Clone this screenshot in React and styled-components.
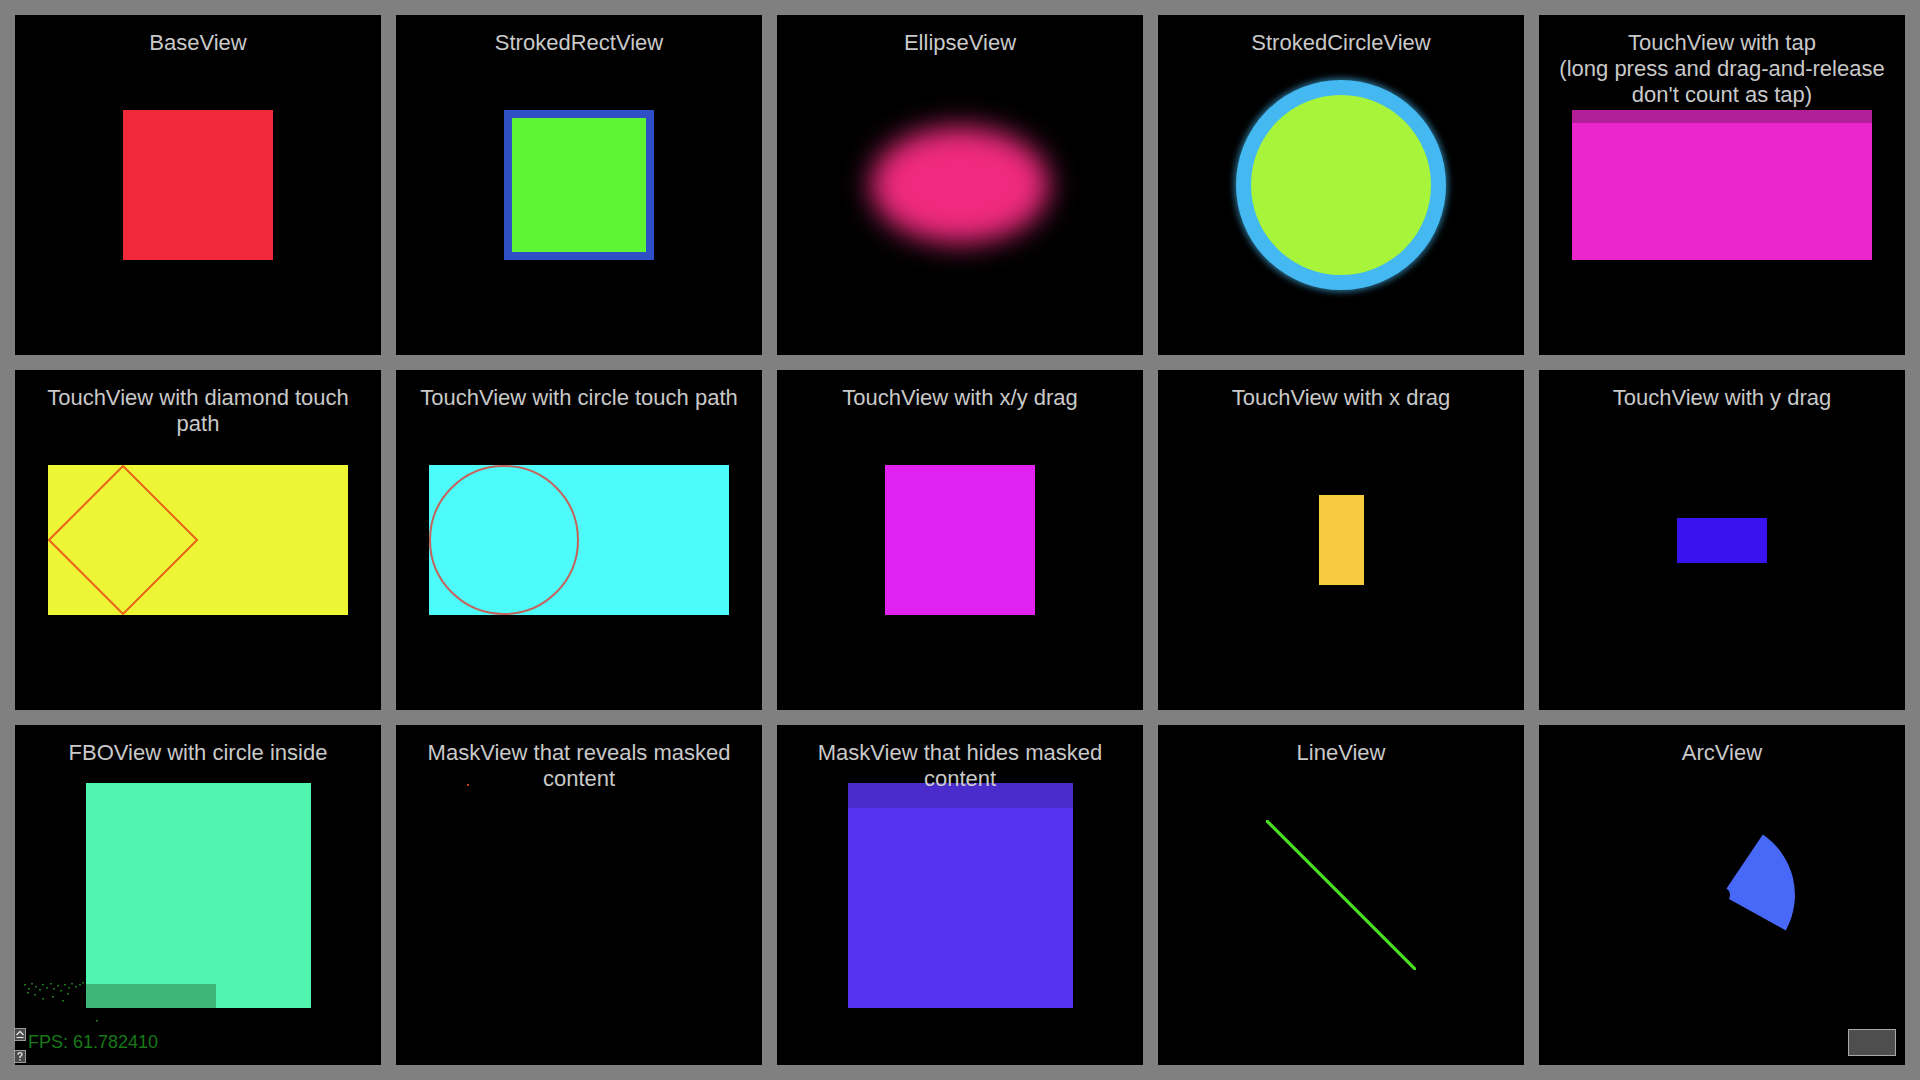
import React from 'react'
import styled, { createGlobalStyle } from 'styled-components'

const GlobalStyle = createGlobalStyle`
  html, body { margin: 0; padding: 0; background: #808080; }
  body { font-family: "Liberation Sans", Arial, sans-serif; }
`

const Screen = styled.main`
  position: relative;
  width: 1920px;
  height: 1080px;
  box-sizing: border-box;
  padding: 15px;
  display: grid;
  grid-template-columns: repeat(5, 366px);
  grid-template-rows: repeat(3, 340px);
  gap: 15px;
  background: #808080;
  overflow: hidden;
`

const Panel = styled.section`
  position: relative;
  display: grid;
  background: #000;
  overflow: hidden;
`

const Title = styled.h2`
  grid-area: 1 / 1;
  align-self: start;
  z-index: 1;
  margin: 0;
  padding: 15px 12px 0;
  font: 400 22px/26px "Liberation Sans", Arial, sans-serif;
  color: #c9c9c9;
  text-align: center;
`

const Stage = styled.div`
  grid-area: 1 / 1;
  display: flex;
  align-items: center;
  justify-content: center;
`

const Block = styled.div`
  position: relative;
  box-sizing: border-box;
  width: ${p => p.$w}px;
  height: ${p => p.$h}px;
  background: ${p => p.$color};
  border: ${p => (p.$stroke ? `8px solid ${p.$stroke}` : 'none')};
  box-shadow: ${p => (p.$band ? `inset 0 ${p.$bandH}px 0 ${p.$band}` : 'none')};
  svg { display: block; }
`

const Glow = styled.div`
  width: 178px;
  height: 116px;
  border-radius: 50%;
  background: #f02a7e;
  filter: blur(14px);
`

const Ring = styled.div`
  box-sizing: border-box;
  width: 210px;
  height: 210px;
  border-radius: 50%;
  border: 15px solid #44b8f0;
  background: #a8f43a;
  box-shadow: 0 0 6px 2px rgba(68, 184, 240, 0.6);
`

const Strip = styled.div`
  position: absolute;
  left: 0;
  bottom: 0;
  width: 130px;
  height: 24px;
  background: #3db676;
`

const Speck = styled.div`
  position: absolute;
  left: ${p => p.$x}px;
  top: ${p => p.$y}px;
  width: 2px;
  height: 2px;
  background: ${p => p.$color};
`

const Fps = styled.div`
  position: absolute;
  left: 28px;
  top: 1033px;
  font: 400 18px/18px "Liberation Sans", Arial, sans-serif;
  color: #187818;
  z-index: 2;
`

const DebugButton = styled.div`
  position: absolute;
  left: 14px;
  top: ${p => p.$top}px;
  width: 12px;
  height: 13px;
  box-sizing: border-box;
  border: 1px solid #9a9a9a;
  background: #4a4a4a;
  z-index: 2;
  svg { display: block; }
`

const Noise = styled.svg`
  position: absolute;
  left: 22px;
  top: 980px;
  z-index: 2;
`

const Tray = styled.div`
  position: absolute;
  left: 1848px;
  top: 1029px;
  width: 48px;
  height: 27px;
  box-sizing: border-box;
  border: 1px solid #a8a8a8;
  background: #4e4e4e;
`

const noiseDots = [
  [2, 4], [6, 8], [9, 3], [13, 6], [17, 9], [20, 4], [24, 7], [28, 3], [31, 8],
  [35, 5], [38, 10], [42, 4], [46, 7], [49, 3], [53, 6], [57, 4], [60, 2],
  [12, 14], [20, 18], [30, 16], [40, 20], [5, 12], [45, 13], [74, 40]
]

function Demo({ title, children }) {
  return (
    <Panel>
      <Title>{title}</Title>
      <Stage>{children}</Stage>
    </Panel>
  )
}

export default function App() {
  return (
    <Screen>
      <GlobalStyle />

      <Demo title="BaseView">
        <Block $w={150} $h={150} $color="#f0283a" />
      </Demo>
      <Demo title="StrokedRectView">
        <Block $w={150} $h={150} $color="#5ef532" $stroke="#2f4fc4" />
      </Demo>
      <Demo title="EllipseView">
        <Glow />
      </Demo>
      <Demo title="StrokedCircleView">
        <Ring />
      </Demo>
      <Demo title={<>TouchView with tap<br />(long press and drag-and-release don't count as tap)</>}>
        <Block $w={300} $h={150} $color="#ea26cc" $band="#b31f99" $bandH={13} />
      </Demo>

      <Demo title="TouchView with diamond touch path">
        <Block $w={300} $h={150} $color="#eef535">
          <svg width="150" height="150" viewBox="0 0 150 150">
            <polygon points="75,1 149,75 75,149 1,75" fill="none" stroke="#e8641c" strokeWidth="2" />
          </svg>
        </Block>
      </Demo>
      <Demo title="TouchView with circle touch path">
        <Block $w={300} $h={150} $color="#4dfcfa">
          <svg width="150" height="150" viewBox="0 0 150 150">
            <circle cx="75" cy="75" r="74" fill="none" stroke="#c4625c" strokeWidth="2" />
          </svg>
        </Block>
      </Demo>
      <Demo title="TouchView with x/y drag">
        <Block $w={150} $h={150} $color="#e022f0" />
      </Demo>
      <Demo title="TouchView with x drag">
        <Block $w={45} $h={90} $color="#f8ca40" />
      </Demo>
      <Demo title="TouchView with y drag">
        <Block $w={90} $h={45} $color="#3a12f0" />
      </Demo>

      <Demo title="FBOView with circle inside">
        <Block $w={225} $h={225} $color="#50f5b0">
          <Strip />
        </Block>
      </Demo>
      <Demo title="MaskView that reveals masked content">
        <Block $w={225} $h={225} $color="transparent">
          <Speck $x={0} $y={1} $color="#c0401a" />
        </Block>
      </Demo>
      <Demo title="MaskView that hides masked content">
        <Block $w={225} $h={225} $color="#5632f2" $band="#4a2ccc" $bandH={25} />
      </Demo>
      <Demo title="LineView">
        <svg width="150" height="150" viewBox="0 0 150 150">
          <line x1="0" y1="0" x2="150" y2="150" stroke="#4ae022" strokeWidth="3.2" />
        </svg>
      </Demo>
      <Demo title="ArcView">
        <svg width="150" height="150" viewBox="0 0 150 150">
          <path
            d="M79.5 68.4 L115.8 14.5 A73 73 0 0 1 138.8 110.4 L82 78.9 A8 8 0 0 0 79.5 68.4 Z"
            fill="#4868f8"
          />
        </svg>
      </Demo>

      <Noise width="80" height="44" viewBox="0 0 80 44">
        {noiseDots.map(([x, y], i) => (
          <rect key={i} x={x} y={y} width="2" height="1.5" fill="#1f7a1f" />
        ))}
      </Noise>
      <DebugButton $top={1028}>
        <svg width="10" height="11" viewBox="0 0 10 11">
          <path d="M1.5 6 L5 2.5 L8.5 6" fill="none" stroke="#e0e0e0" strokeWidth="1.4" />
          <line x1="1.5" y1="8.5" x2="8.5" y2="8.5" stroke="#e0e0e0" strokeWidth="1.2" />
        </svg>
      </DebugButton>
      <DebugButton $top={1050}>
        <svg width="10" height="11" viewBox="0 0 10 11">
          <path d="M3 3.8 Q3 1.6 5 1.6 Q7 1.6 7 3.5 Q7 4.8 5 5.6 L5 7" fill="none" stroke="#e0e0e0" strokeWidth="1.4" />
          <rect x="4.3" y="8.2" width="1.4" height="1.4" fill="#e0e0e0" />
        </svg>
      </DebugButton>
      <Fps>FPS: 61.782410</Fps>
      <Tray />
    </Screen>
  )
}
